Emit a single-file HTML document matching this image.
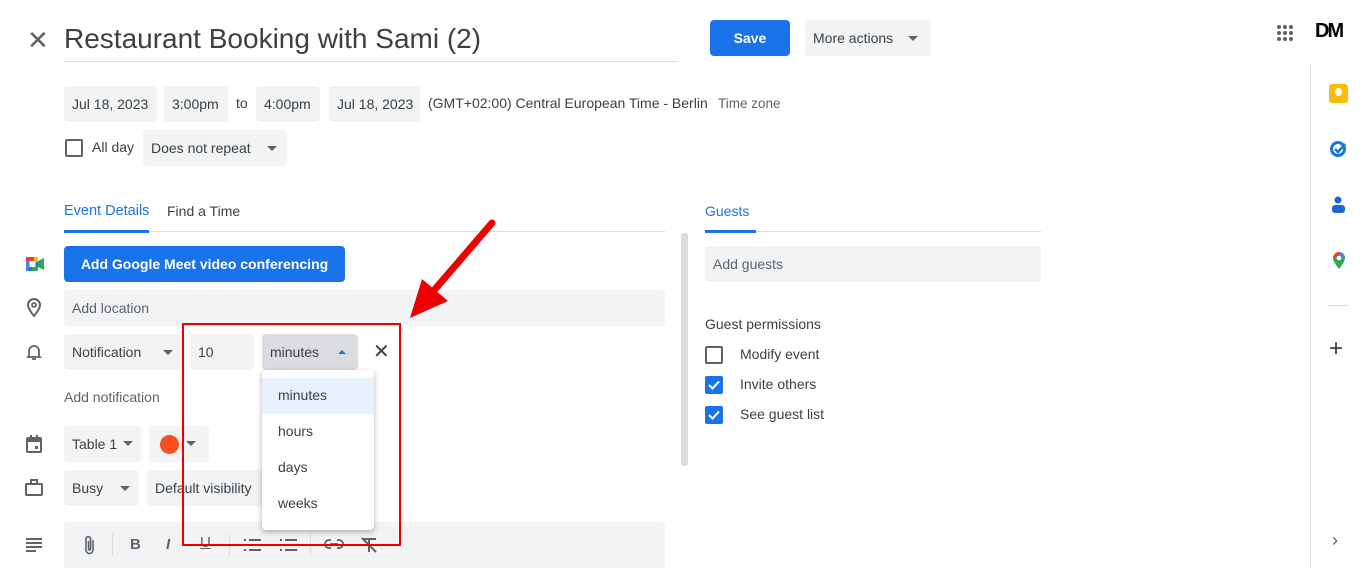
<!DOCTYPE html>
<html><head><style>
*{margin:0;padding:0;box-sizing:border-box}
body{width:1366px;height:568px;overflow:hidden;background:#fff;font-family:"Liberation Sans",Arial,sans-serif;color:#3c4043;position:relative}
.a{position:absolute}
.f{position:absolute;background:#f1f3f4;border-radius:4px;font-size:14px;color:#3c4043;display:flex;align-items:center;padding-left:8px}
.car{position:absolute;width:0;height:0;border-left:5px solid transparent;border-right:5px solid transparent;border-top:5px solid #5f6368}
.t{position:absolute;font-size:14px}
.cb{position:absolute;width:18px;height:18px;border-radius:2px}
</style></head><body>
<div class="a" style="left:27px;top:30px;font-size:26px;color:#5f6368;line-height:20px">✕</div>
<div class="a" style="left:64px;top:23px;font-size:28px;color:#3c4043">Restaurant Booking with Sami (2)</div>
<div class="a" style="left:64px;top:61px;width:614px;height:1px;background:#dadce0"></div>
<div class="a" style="left:710px;top:20px;width:80px;height:36px;background:#1a73e8;border-radius:4px;color:#fff;font-size:14px;font-weight:bold;display:flex;align-items:center;justify-content:center">Save</div>
<div class="f" style="left:805px;top:20px;width:126px;height:36px;">More actions</div>
<div class="car" style="left:908px;top:36px"></div>
<svg class="a" style="left:1276px;top:24px" width="18" height="18"><g fill="#5f6368"><circle cx="3" cy="3" r="2"/><circle cx="9" cy="3" r="2"/><circle cx="15" cy="3" r="2"/><circle cx="3" cy="9" r="2"/><circle cx="9" cy="9" r="2"/><circle cx="15" cy="9" r="2"/><circle cx="3" cy="15" r="2"/><circle cx="9" cy="15" r="2"/><circle cx="15" cy="15" r="2"/></g></svg>
<div class="a" style="left:1315px;top:20px;font-size:20px;font-weight:bold;color:#000;letter-spacing:-2px">DM</div>
<div class="a" style="left:1310px;top:64px;width:1px;height:504px;background:#dadce0"></div>
<div class="a" style="left:1329px;top:84px;width:19px;height:19px;background:#fbbc04;border-radius:3px"></div>
<div class="a" style="left:1335px;top:88px;width:7px;height:8px;background:#fff;border-radius:50%"></div>
<svg class="a" style="left:1329px;top:140px" width="20" height="18"><circle cx="9" cy="9" r="6.5" fill="none" stroke="#1a73e8" stroke-width="3"/><path d="M6 9l3 3 7-8" fill="none" stroke="#1a73e8" stroke-width="2.5"/></svg>
<svg class="a" style="left:1331px;top:196px" width="16" height="18"><circle cx="7" cy="4" r="3.5" fill="#1967d2"/><rect x="1" y="9" width="13" height="8" rx="3" fill="#1967d2"/></svg>
<svg class="a" style="left:1331px;top:251px" width="16" height="20"><path d="M8 1a6 6 0 0 0-6 6c0 4 6 11 6 11s6-7 6-11a6 6 0 0 0-6-6z" fill="#34a853"/><path d="M8 1a6 6 0 0 0-6 6l6 0z" fill="#ea4335"/><path d="M14 7a6 6 0 0 0-6-6v6z" fill="#4285f4"/><circle cx="8" cy="7" r="2.3" fill="#fff"/></svg>
<div class="a" style="left:1328px;top:305px;width:21px;height:1px;background:#dadce0"></div>
<div class="a" style="left:1329px;top:335px;font-size:24px;color:#3c4043">+</div>
<div class="a" style="left:1332px;top:530px;font-size:18px;color:#5f6368">›</div>

<div class="f" style="left:64px;top:86px;width:93px;height:36px">Jul 18, 2023</div>
<div class="f" style="left:164px;top:86px;height:36px;width:64px">3:00pm</div>
<div class="t" style="left:236px;top:95px">to</div>
<div class="f" style="left:256px;top:86px;width:64px;height:36px">4:00pm</div>
<div class="f" style="left:329px;top:86px;width:91px;height:36px">Jul 18, 2023</div>
<div class="t" style="left:428px;top:95px">(GMT+02:00) Central European Time - Berlin</div>
<div class="t" style="left:718px;top:96px;font-size:13.5px;color:#5f6368">Time zone</div>
<div class="cb" style="left:65px;top:139px;border:2px solid #5f6368"></div>
<div class="t" style="left:92px;top:139px">All day</div>
<div class="f" style="left:143px;top:130px;width:144px;height:36px">Does not repeat</div>
<div class="car" style="left:267px;top:146px"></div>

<div class="t" style="left:64px;top:203px;color:#1a73e8;font-size:14.5px">Event Details</div>
<div class="t" style="left:167px;top:203px;color:#3c4043;font-size:14px">Find a Time</div>
<div class="a" style="left:64px;top:231px;width:601px;height:1px;background:#dadce0"></div>
<div class="a" style="left:64px;top:230px;width:85px;height:3px;background:#1a73e8"></div>
<div class="t" style="left:705px;top:203px;color:#1a73e8;font-size:14px">Guests</div>
<div class="a" style="left:705px;top:231px;width:336px;height:1px;background:#dadce0"></div>
<div class="a" style="left:705px;top:230px;width:51px;height:3px;background:#1a73e8"></div>
<div class="a" style="left:681px;top:233px;width:7px;height:233px;background:#dadce0;border-radius:3px"></div>

<svg class="a" style="left:25px;top:256px" width="20" height="16"><rect x="1" y="1" width="12" height="14" rx="2" fill="#1a73e8"/><rect x="1" y="1" width="12" height="4" fill="#ea4335"/><rect x="7" y="11" width="6" height="4" fill="#34a853"/><rect x="1" y="5" width="3" height="10" fill="#4285f4"/><rect x="4.5" y="5" width="6" height="6" fill="#fff"/><path d="M13 5l6-3v12l-6-3z" fill="#34a853"/><rect x="9" y="1" width="4" height="5" fill="#fbbc04"/></svg>
<div class="a" style="left:64px;top:246px;width:281px;height:36px;background:#1a73e8;border-radius:4px;color:#fff;font-weight:bold;font-size:14px;display:flex;align-items:center;justify-content:center">Add Google Meet video conferencing</div>
<svg class="a" style="left:26px;top:298px" width="16" height="20"><path d="M8 1a6 6 0 0 0-6 6c0 4 6 11 6 11s6-7 6-11a6 6 0 0 0-6-6z" fill="none" stroke="#5f6368" stroke-width="2"/><circle cx="8" cy="7" r="2" fill="none" stroke="#5f6368" stroke-width="1.8"/></svg>
<div class="f" style="left:64px;top:290px;width:601px;height:36px;color:#5f6368">Add location</div>
<svg class="a" style="left:26px;top:343px" width="16" height="18"><path d="M3 13V8a5 5 0 0 1 10 0v5l1 1H2z" fill="none" stroke="#5f6368" stroke-width="1.8"/><path d="M6 16h4" stroke="#5f6368" stroke-width="1.8"/></svg>
<div class="f" style="left:64px;top:334px;width:118px;height:36px">Notification</div>
<div class="car" style="left:163px;top:350px"></div>
<div class="f" style="left:190px;top:334px;width:64px;height:36px">10</div>
<div class="f" style="left:262px;top:334px;width:96px;height:36px;background:#dadce0">minutes</div>
<div class="a" style="left:338px;top:350px;border-left:4px solid transparent;border-right:4px solid transparent;border-bottom:4px solid #1a73e8"></div>
<div class="a" style="left:373px;top:339px;font-size:20px;color:#3c4043">✕</div>
<div class="t" style="left:64px;top:389px;font-size:14px;color:#5f6368">Add notification</div>
<svg class="a" style="left:26px;top:435px" width="16" height="18"><rect x="1" y="3" width="14" height="14" rx="1" fill="none" stroke="#5f6368" stroke-width="2"/><rect x="1" y="3" width="14" height="4" fill="#5f6368"/><rect x="4" y="0" width="2" height="4" fill="#5f6368"/><rect x="10" y="0" width="2" height="4" fill="#5f6368"/><rect x="9" y="11" width="3" height="3" fill="#5f6368"/></svg>
<div class="f" style="left:64px;top:426px;width:77px;height:36px">Table 1</div>
<div class="car" style="left:123px;top:441px"></div>
<div class="f" style="left:149px;top:426px;width:60px;height:36px"></div>
<div class="a" style="left:160px;top:435px;width:19px;height:19px;border-radius:50%;background:#f4511e"></div>
<div class="car" style="left:186px;top:441px"></div>
<svg class="a" style="left:25px;top:479px" width="18" height="18"><rect x="1" y="5" width="16" height="11" rx="1" fill="none" stroke="#5f6368" stroke-width="2"/><rect x="6" y="1" width="6" height="4" fill="none" stroke="#5f6368" stroke-width="2"/></svg>
<div class="f" style="left:64px;top:470px;width:75px;height:36px">Busy</div>
<div class="car" style="left:120px;top:486px"></div>
<div class="f" style="left:147px;top:470px;width:120px;height:36px">Default visibility</div>
<svg class="a" style="left:26px;top:538px" width="18" height="14"><path d="M0 1h16M0 5h16M0 9h16M0 13h10" stroke="#5f6368" stroke-width="2"/></svg>
<div class="a" style="left:64px;top:522px;width:601px;height:46px;background:#f1f3f4;border-radius:4px 4px 0 0"></div>
<svg class="a" style="left:84px;top:535px" width="12" height="20"><path d="M9 5v10a3.5 3.5 0 0 1-7 0V4a2.3 2.3 0 0 1 4.6 0v10a1 1 0 0 1-2 0V6" fill="none" stroke="#5f6368" stroke-width="1.6"/></svg>
<div class="a" style="left:112px;top:534px;width:1px;height:22px;background:#dadce0"></div>
<div class="a" style="left:130px;top:536px;font-size:15px;font-weight:bold;color:#5f6368">B</div>
<div class="a" style="left:166px;top:536px;font-size:15px;font-weight:bold;font-style:italic;color:#5f6368">I</div>
<div class="a" style="left:200px;top:534px;font-size:15px;text-decoration:underline;color:#5f6368">U</div>
<div class="a" style="left:229px;top:534px;width:1px;height:22px;background:#dadce0"></div>
<svg class="a" style="left:243px;top:538px" width="18" height="14"><path d="M6 2h12M6 7h12M6 12h12M1 2h2M1 7h2M1 12h2" stroke="#5f6368" stroke-width="2"/></svg>
<svg class="a" style="left:279px;top:538px" width="18" height="14"><path d="M6 2h12M6 7h12M6 12h12M1 2h2M1 7h2M1 12h2" stroke="#5f6368" stroke-width="2"/></svg>
<div class="a" style="left:310px;top:534px;width:1px;height:22px;background:#dadce0"></div>
<svg class="a" style="left:324px;top:539px" width="20" height="10"><path d="M7 1H5a4 4 0 0 0 0 8h2M13 1h2a4 4 0 0 1 0 8h-2M6 5h8" fill="none" stroke="#5f6368" stroke-width="1.8"/></svg>
<svg class="a" style="left:360px;top:537px" width="18" height="16"><path d="M2 2h14M9 2v13M2 1l14 14" stroke="#5f6368" stroke-width="2"/></svg>

<div class="a" style="left:262px;top:370px;width:112px;height:160px;background:#fff;border-radius:4px;box-shadow:0 2px 6px rgba(0,0,0,.3)"></div>
<div class="a" style="left:262px;top:378px;width:112px;height:36px;background:#e8f0fe"></div>
<div class="t" style="left:278px;top:387px">minutes</div>
<div class="t" style="left:278px;top:423px">hours</div>
<div class="t" style="left:278px;top:459px">days</div>
<div class="t" style="left:278px;top:495px">weeks</div>
<div class="a" style="left:182px;top:323px;width:219px;height:223px;border:2px solid #e00"></div>
<svg class="a" style="left:400px;top:215px" width="100" height="110"><path d="M92 8L30 80" stroke="#e00" stroke-width="7" stroke-linecap="round"/><path d="M10 103L22 64L48 86z" fill="#e00"/></svg>

<div class="f" style="left:705px;top:246px;width:336px;height:36px;color:#5f6368">Add guests</div>
<div class="t" style="left:705px;top:316px">Guest permissions</div>
<div class="cb" style="left:705px;top:346px;border:2px solid #5f6368"></div>
<div class="t" style="left:740px;top:346px">Modify event</div>
<div class="cb" style="left:705px;top:376px;background:#1a73e8"></div>
<svg class="a" style="left:705px;top:376px" width="18" height="18"><path d="M4 9l3.5 3.5L14 5.5" fill="none" stroke="#fff" stroke-width="2"/></svg>
<div class="t" style="left:740px;top:376px">Invite others</div>
<div class="cb" style="left:705px;top:406px;background:#1a73e8"></div>
<svg class="a" style="left:705px;top:406px" width="18" height="18"><path d="M4 9l3.5 3.5L14 5.5" fill="none" stroke="#fff" stroke-width="2"/></svg>
<div class="t" style="left:740px;top:406px">See guest list</div>
</body></html>
